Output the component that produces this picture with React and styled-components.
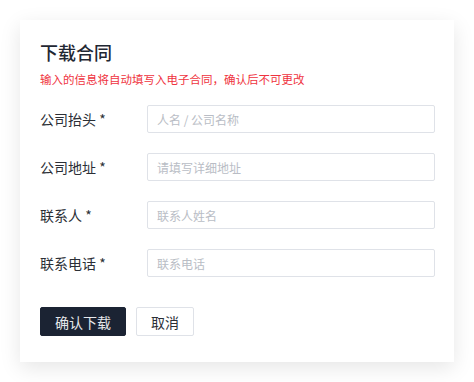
import React from 'react';
import styled, { createGlobalStyle } from 'styled-components';

const GlobalStyle = createGlobalStyle`
  body {
    margin: 0;
    background: #ffffff;
    font-family: "Noto Sans CJK SC", "Noto Sans", sans-serif;
  }
`;

const Page = styled.div`
  padding: 20px;
`;

const Card = styled.div`
  width: 434px;
  box-sizing: border-box;
  padding: 20px 19px 26px 20px;
  background: #fff;
  box-shadow: 0 6px 20px rgba(0, 0, 0, 0.1);
`;

const Title = styled.h2`
  margin: 0;
  font-size: 18px;
  line-height: 24px;
  font-weight: 500;
  color: #1f2733;
`;

const Notice = styled.p`
  margin: 6px 0 17px;
  font-size: 11.5px;
  line-height: 18px;
  color: #ef3340;
`;

const Fields = styled.div`
  display: flex;
  flex-direction: column;
  gap: 20px;
`;

const Row = styled.label`
  display: grid;
  grid-template-columns: 107px 1fr;
  align-items: center;
`;

const Label = styled.span`
  font-size: 14px;
  color: #2b2f36;
`;

const Input = styled.input`
  height: 28px;
  box-sizing: border-box;
  border: 1px solid #dfe2e8;
  border-radius: 2px;
  padding: 0 9px;
  font-family: inherit;
  font-size: 12px;
  color: #333;
  outline: none;

  &::placeholder {
    color: #b9bdc5;
  }
`;

const Actions = styled.div`
  display: flex;
  gap: 10px;
  margin-top: 30px;
`;

const Button = styled.button`
  height: 29px;
  box-sizing: border-box;
  padding: 0 14px;
  border-radius: 2px;
  font-family: inherit;
  font-size: 14px;
  cursor: pointer;
  border: 1px solid ${p => (p.$primary ? '#1b2333' : '#dfe2e8')};
  background: ${p => (p.$primary ? '#1b2333' : '#fff')};
  color: ${p => (p.$primary ? '#e6e8ec' : '#2b2f36')};
`;

const fields = [
  { label: '公司抬头 *', placeholder: '人名 / 公司名称' },
  { label: '公司地址 *', placeholder: '请填写详细地址' },
  { label: '联系人 *', placeholder: '联系人姓名' },
  { label: '联系电话 *', placeholder: '联系电话' },
];

export default function App() {
  return (
    <Page>
      <GlobalStyle />
      <Card>
        <Title>下载合同</Title>
        <Notice>输入的信息将自动填写入电子合同，确认后不可更改</Notice>
        <Fields>
          {fields.map(f => (
            <Row key={f.label}>
              <Label>{f.label}</Label>
              <Input placeholder={f.placeholder} />
            </Row>
          ))}
        </Fields>
        <Actions>
          <Button $primary>确认下载</Button>
          <Button>取消</Button>
        </Actions>
      </Card>
    </Page>
  );
}
